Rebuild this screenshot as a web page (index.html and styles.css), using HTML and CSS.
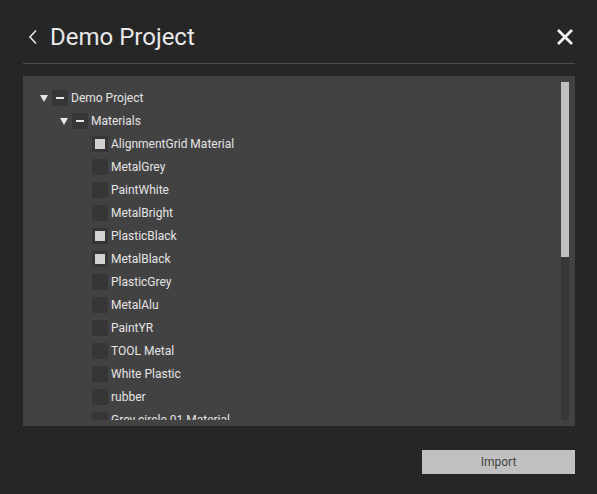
FILE: index.html
```html
<!DOCTYPE html>
<html>
<head>
<meta charset="utf-8">
<link rel="stylesheet" href="styles.css">
</head>
<body>
<div class="dialog">
  <header class="header">
    <svg class="back" width="10" height="16" viewBox="0 0 10 16"><path d="M8 1.5 L2 8 L8 14.5" fill="none" stroke="#e6e6e6" stroke-width="1.6"/></svg>
    <h1 class="title">Demo Project</h1>
    <svg class="close" width="18" height="18" viewBox="0 0 18 18"><path d="M2 2 L16 16 M16 2 L2 16" fill="none" stroke="#f2f2f2" stroke-width="2.8"/></svg>
  </header>
  <section class="panel">
    <div class="list">
      <div class="row lvl0"><span class="tri"></span><span class="cb ind"></span><span class="label">Demo Project</span></div>
      <div class="row lvl1"><span class="tri"></span><span class="cb ind"></span><span class="label">Materials</span></div>
      <div class="row lvl2"><span class="cb on"></span><span class="label">AlignmentGrid Material</span></div>
      <div class="row lvl2"><span class="cb"></span><span class="label">MetalGrey</span></div>
      <div class="row lvl2"><span class="cb"></span><span class="label">PaintWhite</span></div>
      <div class="row lvl2"><span class="cb"></span><span class="label">MetalBright</span></div>
      <div class="row lvl2"><span class="cb on"></span><span class="label">PlasticBlack</span></div>
      <div class="row lvl2"><span class="cb on"></span><span class="label">MetalBlack</span></div>
      <div class="row lvl2"><span class="cb"></span><span class="label">PlasticGrey</span></div>
      <div class="row lvl2"><span class="cb"></span><span class="label">MetalAlu</span></div>
      <div class="row lvl2"><span class="cb"></span><span class="label">PaintYR</span></div>
      <div class="row lvl2"><span class="cb"></span><span class="label">TOOL Metal</span></div>
      <div class="row lvl2"><span class="cb"></span><span class="label">White Plastic</span></div>
      <div class="row lvl2"><span class="cb"></span><span class="label">rubber</span></div>
      <div class="row lvl2"><span class="cb"></span><span class="label">Grey circle 01 Material</span></div>
      <div class="row lvl2"><span class="cb"></span><span class="label">Chrome</span></div>
    </div>
    <div class="scrollbar"><div class="thumb"></div></div>
  </section>
  <footer class="footer">
    <button class="import">Import</button>
  </footer>
</div>
</body>
</html>
```
FILE: styles.css
```css
html, body {
  margin: 0;
  padding: 0;
  background: #262626;
  font-family: Roboto, "Liberation Sans", sans-serif;
}
.dialog {
  width: 597px;
  height: 494px;
  padding: 0 22px 0 23px;
  box-sizing: border-box;
}
.header {
  display: flex;
  align-items: center;
  height: 53px;
  padding-top: 10px;
  border-bottom: 1px solid #4a4a4a;
}
.back {
  margin-left: 5px;
  margin-right: 12px;
}
.title {
  margin: 0;
  font-size: 24px;
  font-weight: 400;
  color: #e8e8e8;
  flex: 1;
}
.close {
  margin-right: 1px;
}
.panel {
  margin-top: 12px;
  height: 350px;
  background: #434243;
  display: flex;
  padding: 6px 6px 6px 0;
  box-sizing: border-box;
}
.list {
  flex: 1;
  overflow: hidden;
  padding-top: 4px;
}
.row {
  height: 23px;
  display: flex;
  align-items: center;
  font-size: 12px;
  color: #e4e4e4;
}
.lvl0 { padding-left: 17px; }
.lvl1 { padding-left: 37px; }
.lvl2 { padding-left: 69px; }
.tri {
  width: 0;
  height: 0;
  border-left: 4px solid transparent;
  border-right: 4px solid transparent;
  border-top: 7px solid #e6e6e6;
  margin-right: 4px;
  margin-top: 1px;
}
.cb {
  width: 16px;
  height: 16px;
  background: #363636;
  margin-right: 3px;
  position: relative;
  flex-shrink: 0;
}
.cb.on::after {
  content: "";
  position: absolute;
  left: 3px;
  top: 3px;
  width: 10px;
  height: 10px;
  background: #d2d2d2;
}
.cb.ind::after {
  content: "";
  position: absolute;
  left: 4px;
  top: 7px;
  width: 8px;
  height: 2px;
  background: #e6e6e6;
}
.label {
  white-space: nowrap;
}
.scrollbar {
  width: 8px;
  background: #373737;
  position: relative;
}
.thumb {
  height: 175px;
  background: #c0c0c0;
}
.footer {
  display: flex;
  justify-content: flex-end;
  margin-top: 24px;
}
.import {
  width: 153px;
  height: 24px;
  border: none;
  background: #c0c0c0;
  color: #444;
  font-family: Roboto, "Liberation Sans", sans-serif;
  font-size: 12px;
  padding: 0;
}
```
